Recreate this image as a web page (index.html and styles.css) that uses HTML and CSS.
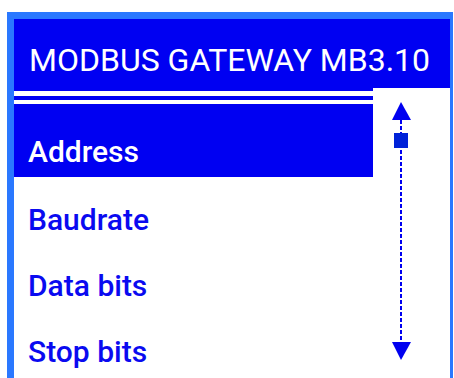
FILE: index.html
```html
<!DOCTYPE html>
<html>
	<head>
		<meta charset="UTF-8">
		<title>Modbus Gateway</title>
		<link rel="stylesheet" href="styles.css">
	</head>
	<body>
		<div id="screen">
			<div class="title">MODBUS GATEWAY MB3.10</div>
			<div class="main">
				<div class="menu">
					<div class="stripes">
						<div class="line"></div>
						<div class="line"></div>
					</div>
					<ul>
						<li class="active">Address</li>
						<li>Baudrate</li>
						<li>Data bits</li>
						<li>Stop bits</li>
					</ul>
				</div>
				<div class="scroll">
					<svg width="77" height="290" viewBox="0 0 77 290">
						<polygon points="28,14 19,32 38,32" fill="#0000f0"/>
						<line x1="28" y1="32" x2="28" y2="254" stroke="#0000f0" stroke-width="2" stroke-dasharray="4 2"/>
						<rect x="21" y="45" width="14" height="15" fill="#0022d8"/>
						<polygon points="19,254 38,254 28,272" fill="#0000f0"/>
					</svg>
				</div>
			</div>
		</div>
	</body>
</html>
```

FILE: styles.css
```css
body{
	margin: 0;
	background: #FFFFFF;
	font-family: Roboto, "Liberation Sans", Arial, sans-serif;
	overflow: hidden;
}
#screen{
	margin: 12px 0 0 7px;
	width: 436px;
	height: 359px;
	overflow: hidden;
	border-top: 7px solid #2a78ff;
	border-left: 7px solid #2a78ff;
	border-right: 3px solid #2a78ff;
	background: #FFFFFF;
}
.title{
	height: 69px;
	box-sizing: border-box;
	padding: 24px 0 0 15px;
	background: #0000f2;
	color: #FFFFFF;
	font-size: 32px;
	font-weight: 400;
	line-height: 34px;
	letter-spacing: 0;
	white-space: nowrap;
}
.main{
	display: flex;
}
.menu{
	width: 359px;
}
.stripes{
	background: #0000f2;
	padding: 3px 0 5px 0;
}
.stripes .line{
	height: 5px;
	background: #FFFFFF;
	margin-bottom: 4px;
}
.stripes .line:last-child{
	margin-bottom: 0;
	height: 4px;
}
.menu ul{
	list-style: none;
	margin: 0;
	padding: 0;
}
.menu li{
	height: 66px;
	box-sizing: border-box;
	padding: 19px 0 0 14px;
	font-size: 30px;
	font-weight: 500;
	line-height: 47px;
	color: #0a0af0;
}
.menu li.active{
	height: 68px;
	background: #0000f2;
	color: #FFFFFF;
}
.scroll{
	width: 77px;
}
.scroll svg{
	display: block;
}
```
